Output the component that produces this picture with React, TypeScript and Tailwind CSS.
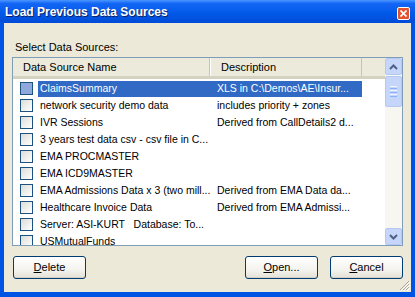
import React from "react";

const rows = [
  { name: "ClaimsSummary", desc: "XLS in C:\\Demos\\AE\\Insur...", selected: true },
  { name: "network security demo data", desc: "includes priority + zones" },
  { name: "IVR Sessions", desc: "Derived from CallDetails2 d..." },
  { name: "3 years test data csv - csv file in C...", desc: "" },
  { name: "EMA PROCMASTER", desc: "" },
  { name: "EMA ICD9MASTER", desc: "" },
  { name: "EMA Admissions Data x 3 (two mill...", desc: "Derived from EMA Data da..." },
  { name: "Healthcare Invoice Data", desc: "Derived from EMA Admissi..." },
  { name: "Server: ASI-KURT   Database: To...", desc: "" },
  { name: "USMutualFunds", desc: "" },
];

function XpButton({ label, hot }: { label: string; hot: string }) {
  const rest = label.slice(1);
  return (
    <button className="flex h-[23px] w-[73px] items-center justify-center rounded-[3px] border border-[#003c74] bg-[linear-gradient(180deg,#ffffff,#f4f3ee_60%,#e3e1d6)] text-[11px] text-black shadow-[inset_0_-1px_0_#d6d0c5]">
      <span>
        <span className="underline">{hot}</span>
        {rest}
      </span>
    </button>
  );
}

function Check({ selected }: { selected?: boolean }) {
  return (
    <span
      className={
        selected
          ? "h-[13px] w-[13px] shrink-0 border border-[#1c5180] bg-[#8fa9dc]"
          : "h-[13px] w-[13px] shrink-0 border border-[#1c5180] bg-[linear-gradient(135deg,#dcdcd7,#ffffff)]"
      }
    />
  );
}

export default function App() {
  return (
    <div
      className="flex h-[297px] w-[415px] flex-col overflow-hidden bg-[#0054e3] text-[11px] text-black"
      style={{ fontFamily: '"Liberation Sans", Arial, sans-serif' }}
    >
      {/* title bar */}
      <div className="flex h-[23px] shrink-0 items-center justify-between bg-[linear-gradient(180deg,#4a96ff_0%,#1466f5_15%,#0058e8_60%,#004bd6_100%)] pl-[5px] pr-[5px]">
        <span className="text-[12px] font-bold text-white [text-shadow:1px_1px_0_#0a1f66]">
          Load Previous Data Sources
        </span>
        <span className="mt-[3px] flex h-[13px] w-[13px] items-center justify-center rounded-[2px] border border-white bg-[#e2542f]">
          <svg width="7" height="7" viewBox="0 0 7 7">
            <path d="M0.5 0.5 L6.5 6.5 M6.5 0.5 L0.5 6.5" stroke="white" strokeWidth="1.6" />
          </svg>
        </span>
      </div>

      {/* body */}
      <div className="relative mx-[4px] mb-[5px] flex flex-1 flex-col bg-[#ece9d8] px-[8px]">
        <div className="ml-[3px] mt-[17px] h-[14px] leading-[14px]">Select Data Sources:</div>

        {/* list */}
        <div className="mt-[3px] flex h-[189px] border border-[#7f9db9] bg-white">
          <div className="flex min-w-0 flex-1 flex-col overflow-hidden">
            <div className="flex h-[21px] shrink-0 border-b-[3px] border-[#d6d2c2] bg-[#ebeadb]">
              <div className="flex w-[197px] items-center border-r border-[#c7c5b2] pl-[10px] shadow-[1px_0_0_#ffffff]">
                Data Source Name
              </div>
              <div className="flex w-[152px] items-center border-r border-[#c7c5b2] pl-[11px]">
                Description
              </div>
              <div className="flex-1" />
            </div>
            <div className="flex flex-col pt-[1px] text-[10.5px]">
              {rows.map((r) => (
                <div key={r.name} className="flex h-[17px] shrink-0 items-center">
                  <div className="flex w-[197px] items-center gap-[5px] pl-[7px]">
                    <Check selected={r.selected} />
                    <span
                      className={
                        r.selected
                          ? "flex h-[16px] flex-1 items-center whitespace-pre bg-[#316ac5] pl-[2px] text-white"
                          : "flex h-[16px] flex-1 items-center overflow-hidden whitespace-pre pl-[2px]"
                      }
                    >
                      {r.name}
                    </span>
                  </div>
                  <div
                    className={
                      r.selected
                        ? "flex h-[16px] w-[152px] items-center overflow-hidden whitespace-nowrap bg-[#316ac5] pl-[7px] text-white"
                        : "flex h-[16px] w-[152px] items-center overflow-hidden whitespace-nowrap pl-[7px]"
                    }
                  >
                    {r.desc}
                  </div>
                </div>
              ))}
            </div>
          </div>

          {/* scrollbar */}
          <div className="flex w-[17px] shrink-0 flex-col bg-[#f7f6f1]">
            <div className="flex h-[17px] items-center justify-center rounded-[2px] border border-[#b5c9f0] bg-[#c6d6fa]">
              <svg width="9" height="6" viewBox="0 0 9 6">
                <path d="M1 5 L4.5 1.5 L8 5" fill="none" stroke="#4d6185" strokeWidth="2" />
              </svg>
            </div>
            <div className="mt-[1px] flex h-[31px] flex-col items-center justify-center gap-[1px] rounded-[2px] border border-[#b5c9f0] bg-[#c6d6fa]">
              <span className="h-[1px] w-[7px] bg-[#eef4fe]" />
              <span className="h-[1px] w-[7px] bg-[#8cb0f8]" />
              <span className="h-[1px] w-[7px] bg-[#eef4fe]" />
              <span className="h-[1px] w-[7px] bg-[#8cb0f8]" />
              <span className="h-[1px] w-[7px] bg-[#eef4fe]" />
              <span className="h-[1px] w-[7px] bg-[#8cb0f8]" />
            </div>
            <div className="flex-1" />
            <div className="flex h-[17px] items-center justify-center rounded-[2px] border border-[#b5c9f0] bg-[#c6d6fa]">
              <svg width="9" height="6" viewBox="0 0 9 6">
                <path d="M1 1 L4.5 4.5 L8 1" fill="none" stroke="#4d6185" strokeWidth="2" />
              </svg>
            </div>
          </div>
        </div>

        {/* buttons */}
        <div className="mt-[10px] flex items-center pl-[1px]">
          <XpButton hot="D" label="Delete" />
          <div className="flex-1" />
          <div className="flex gap-[12px]">
            <XpButton hot="O" label="Open..." />
            <XpButton hot="C" label="Cancel" />
          </div>
        </div>

        {/* size grip */}
        <svg className="absolute bottom-[1px] right-[1px]" width="11" height="11" viewBox="0 0 11 11">
          <path d="M10 1 L1 10 M10 4 L4 10 M10 7 L7 10" stroke="#aca899" strokeWidth="1" />
          <path d="M11 2 L2 11 M11 5 L5 11 M11 8 L8 11" stroke="#ffffff" strokeWidth="1" />
        </svg>
      </div>
    </div>
  );
}
